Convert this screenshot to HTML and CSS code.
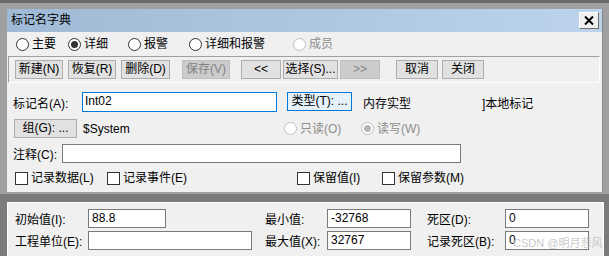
FILE: index.html
```html
<!DOCTYPE html>
<html lang="zh-CN">
<head>
    <meta charset="UTF-8">
    <meta name="viewport" content="width=device-width, initial-scale=1.0">
    <title>标记名字典</title>
    <link rel="stylesheet" href="styles.css">
</head>
<body>
    <div class="upper">
        <div class="dialog">
            <div class="titlebar">
                <span class="title">标记名字典</span>
                <span class="close-btn">
                    <svg width="10" height="9" viewBox="0 0 10 9"><path d="M1 0.5 L9 8.5 M9 0.5 L1 8.5" stroke="#000" stroke-width="2"/></svg>
                </span>
            </div>

            <div class="radio-row">
                <label class="radio-item w52"><span class="radio"></span>主要</label>
                <label class="radio-item w60"><span class="radio checked"></span>详细</label>
                <label class="radio-item w61"><span class="radio"></span>报警</label>
                <label class="radio-item w104"><span class="radio"></span>详细和报警</label>
                <label class="radio-item disabled"><span class="radio"></span>成员</label>
            </div>

            <div class="toolbar">
                <div class="btn-group">
                    <span class="btn">新建(N)</span>
                    <span class="btn">恢复(R)</span>
                    <span class="btn w49">删除(D)</span>
                </div>
                <div class="btn-group gap-save">
                    <span class="btn disabled">保存(V)</span>
                </div>
                <div class="btn-group tight gap-nav">
                    <span class="btn nav">&lt;&lt;</span>
                    <span class="btn select">选择(S)...</span>
                    <span class="btn nav disabled">&gt;&gt;</span>
                </div>
                <div class="btn-group mid gap-end">
                    <span class="btn short">取消</span>
                    <span class="btn short">关闭</span>
                </div>
            </div>

            <div class="form-row row-name">
                <span class="label w69">标记名(A):</span>
                <span class="input focused name-input">Int02</span>
                <span class="btn type-btn">类型(T): ...</span>
                <span class="type-text">内存实型</span>
                <span class="local-text">]本地标记</span>
            </div>

            <div class="form-row row-group">
                <span class="btn group-btn">组(G): ...</span>
                <span class="system-text">$System</span>
                <label class="radio-item disabled w77"><span class="radio"></span>只读(O)</label>
                <label class="radio-item disabled"><span class="radio checked"></span>读写(W)</label>
            </div>

            <div class="form-row row-comment">
                <span class="label w49">注释(C):</span>
                <span class="input comment-input"></span>
            </div>

            <div class="form-row row-checks">
                <label class="check-item w92"><span class="check"></span>记录数据(L)</label>
                <label class="check-item w190"><span class="check"></span>记录事件(E)</label>
                <label class="check-item w85"><span class="check"></span>保留值(I)</label>
                <label class="check-item"><span class="check"></span>保留参数(M)</label>
            </div>
        </div>
    </div>

    <div class="lower">
        <div class="panel">
            <div class="value-grid">
                <span class="label">初始值(I):</span>
                <span class="input short-input">88.8</span>
                <span></span>
                <span class="label">最小值:</span>
                <span class="input">-32768</span>
                <span></span>
                <span class="label">死区(D):</span>
                <span class="input">0</span>

                <span class="label">工程单位(E):</span>
                <span class="input"></span>
                <span></span>
                <span class="label">最大值(X):</span>
                <span class="input">32767</span>
                <span></span>
                <span class="label">记录死区(B):</span>
                <span class="input">0</span>
            </div>
            <div class="watermark">CSDN @明月悲风</div>
        </div>
    </div>
</body>
</html>
```

FILE: styles.css
```css
body {
    margin: 0;
    width: 609px;
    height: 256px;
    overflow: hidden;
    font-family: "Liberation Sans", "Noto Sans CJK SC", sans-serif;
    font-size: 12px;
    color: #000;
    background-color: #7b7b7b;
}
.upper {
    height: 185px;
    background-color: #a0a0a0;
    border-top: 3px solid #6b6b6b;
    padding: 6px 6px 0 7px;
}
.dialog {
    width: 596px;
    height: 183px;
    background-color: #f0f0f0;
    border-right: 1px solid #8a8a8a;
    box-sizing: border-box;
}
.titlebar {
    height: 23px;
    display: flex;
    align-items: center;
    justify-content: space-between;
    padding: 0 3px 0 4px;
    background: linear-gradient(to right, #9fbad6, #bcd3eb);
}
.title {
    line-height: 23px;
}
.close-btn {
    width: 20px;
    height: 17px;
    box-sizing: border-box;
    display: flex;
    align-items: center;
    justify-content: center;
    background-color: #f0f0f0;
    border: 1px solid;
    border-color: #fff #6e6e6e #6e6e6e #fff;
}

/* 单选 / 复选 */
.radio-row {
    height: 24px;
    display: flex;
    align-items: center;
    padding-left: 9px;
}
.radio-item, .check-item {
    display: flex;
    align-items: center;
    line-height: 14px;
}
.radio {
    width: 13px;
    height: 13px;
    box-sizing: border-box;
    border: 1px solid #333;
    border-radius: 50%;
    background-color: #fff;
    margin-right: 3px;
    display: flex;
    align-items: center;
    justify-content: center;
}
.radio.checked::after {
    content: "";
    width: 7px;
    height: 7px;
    border-radius: 50%;
    background-color: #333;
}
.radio-item.disabled {
    color: #8d8d8d;
}
.radio-item.disabled .radio {
    border-color: #c0c0c0;
}
.radio-item.disabled .radio.checked::after {
    background-color: #b5b5b5;
}
.check {
    width: 13px;
    height: 13px;
    box-sizing: border-box;
    border: 1px solid #333;
    background-color: #fff;
    margin-right: 3px;
}
.w49 { width: 49px; }
.w52 { width: 52px; }
.w60 { width: 60px; }
.w61 { width: 61px; }
.w69 { width: 69px; }
.w77 { width: 77px; }
.w85 { width: 85px; }
.w92 { width: 92px; }
.w104 { width: 104px; }
.w190 { width: 190px; }

/* 工具栏按钮 */
.toolbar {
    height: 27px;
    box-sizing: border-box;
    margin: 0 2px 0 1px;
    border: 1px solid;
    border-color: #a0a0a0 #fff #fff #a0a0a0;
    display: flex;
    padding: 3px 0 0 6px;
}
.btn-group {
    display: flex;
    gap: 5px;
}
.btn-group.tight { gap: 2px; }
.btn-group.mid { gap: 4px; }
.gap-save { margin-left: 12px; }
.gap-nav { margin-left: 11px; }
.gap-end { margin-left: 16px; }
.btn {
    width: 48px;
    height: 19px;
    box-sizing: border-box;
    display: flex;
    align-items: center;
    justify-content: center;
    background-color: #e1e1e1;
    border: 1px solid #adadad;
    line-height: 17px;
    white-space: nowrap;
}
.btn.w49 { width: 49px; }
.btn.nav { width: 40px; }
.btn.select { width: 55px; }
.btn.short { width: 42px; }
.btn.disabled {
    background-color: #cccccc;
    border-color: #bfbfbf;
    color: #838383;
}

/* 表单行 */
.form-row {
    display: flex;
    align-items: center;
    padding-left: 6px;
}
.label {
    white-space: nowrap;
}
.input {
    height: 19px;
    box-sizing: border-box;
    background-color: #fff;
    border: 1px solid #7a7a7a;
    padding-left: 3px;
    line-height: 17px;
}
.input.focused {
    border-color: #0078d7;
}
.row-name {
    margin-top: 9px;
    height: 20px;
}
.name-input {
    width: 195px;
    height: 20px;
    padding-left: 2px;
}
.type-btn {
    width: 65px;
    height: 19px;
    margin-left: 10px;
    align-self: flex-start;
    background-color: #e5f1fb;
    border-color: #0078d7;
}
.type-text {
    margin-left: 11px;
    width: 119px;
}
.row-group {
    margin-top: 7px;
    height: 19px;
    padding-left: 7px;
}
.group-btn {
    width: 63px;
}
.system-text {
    margin-left: 6px;
    width: 201px;
}
.row-comment {
    margin-top: 6px;
    height: 19px;
}
.comment-input {
    width: 399px;
}
.row-checks {
    margin-top: 8px;
    height: 14px;
    padding-left: 8px;
}

/* 下方数值面板 */
.lower {
    padding: 8px 4px 0 7px;
}
.panel {
    position: relative;
    width: 597px;
    height: 54px;
    box-sizing: border-box;
    background-color: #f0f0f0;
    border: 1px solid #fff;
    border-bottom: none;
    padding: 6px 0 0 7px;
}
.value-grid {
    display: grid;
    grid-template-columns: 73px 164px 13px 62px 84px 16px 78px 84px;
    grid-auto-rows: 19px;
    row-gap: 3px;
    align-items: center;
}
.short-input {
    width: 78px;
}
.watermark {
    position: absolute;
    left: 505px;
    top: 33px;
    color: rgba(190, 190, 190, 0.85);
    font-size: 11px;
    line-height: 14px;
    white-space: nowrap;
}
```
